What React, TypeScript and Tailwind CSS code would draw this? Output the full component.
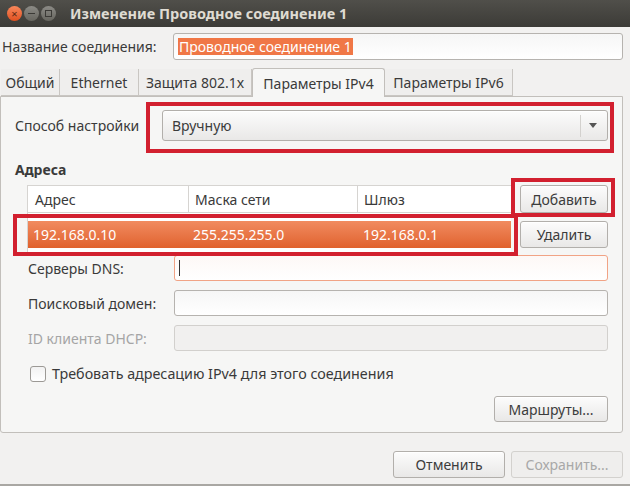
import React from "react";

const btnBase =
  "flex items-center rounded-[3px] border border-[#b2afab] bg-gradient-to-b from-[#fcfcfc] to-[#e9e8e7] text-[#3c3c3c] shadow-[inset_0_1px_0_#ffffff]";
const btn = btnBase + " justify-center";
const input = "rounded-[3px] border border-[#b6b3af] bg-gradient-to-b from-[#f6f6f6] to-white";

function RedBox({ className }: { className: string }) {
  return <div className={"pointer-events-none absolute border-[4px] border-[#d2202f] " + className} />;
}

const tabInactive =
  "flex h-[27px] items-center justify-center border-b border-r border-[#c9c6c2] bg-[#efeeed]";

export default function App() {
  return (
    <div
      className="relative flex h-[486px] w-[630px] flex-col overflow-hidden bg-[#f2f1f0] text-[14px] text-[#3a3a3a]"
      style={{ fontFamily: '"Noto Sans", "DejaVu Sans", sans-serif' }}
    >
      {/* title bar */}
      <div className="flex h-[27px] shrink-0 items-center bg-gradient-to-b from-[#504f4a] to-[#3c3b37] pl-[7px]">
        <div className="flex items-center gap-[2px]">
          <div className="flex h-[15px] w-[15px] items-center justify-center rounded-full bg-gradient-to-b from-[#f8875a] to-[#e0501e] text-[11px] leading-none text-[#5a2a14]">
            ×
          </div>
          <div className="flex h-[15px] w-[15px] items-center justify-center rounded-full bg-gradient-to-b from-[#8c8b86] to-[#67665f]">
            <div className="h-[1.5px] w-[7px] bg-[#3b3a36]" />
          </div>
          <div className="flex h-[15px] w-[15px] items-center justify-center rounded-full bg-gradient-to-b from-[#8c8b86] to-[#67665f]">
            <div className="h-[7px] w-[7px] border border-[#3b3a36]" />
          </div>
        </div>
        <div className="ml-[14px] text-[14.5px] font-bold text-[#dfdbd2]">Изменение Проводное соединение 1</div>
      </div>

      {/* name row */}
      <div className="mt-[6px] flex h-[27px] shrink-0 items-center">
        <div className="w-[173px] pl-[2px]">Название соединения:</div>
        <div className={"flex h-[27px] w-[450px] items-center pl-[4px] " + input}>
          <span className="bg-[#f07746] px-[1px] leading-[17px] text-white">Проводное соединение 1</span>
        </div>
      </div>

      {/* tabs */}
      <div className="mt-[8px] flex h-[28px] shrink-0 items-end pl-[1px]">
        <div className={tabInactive + " w-[59px]"}>Общий</div>
        <div className={tabInactive + " w-[79px]"}>Ethernet</div>
        <div className={tabInactive + " w-[113px]"}>Защита 802.1x</div>
        <div className="relative z-10 -mb-[1px] flex h-[29px] w-[133px] items-center justify-center rounded-t-[3px] border border-b-0 border-[#c2bfbb] bg-[#f6f6f5]">
          Параметры IPv4
        </div>
        <div className={tabInactive + " w-[128px]"}>Параметры IPv6</div>
      </div>

      {/* panel */}
      <div className="relative flex h-[337px] w-[623px] shrink-0 flex-col rounded-b-[3px] border border-[#c2bfbb] bg-[#f6f6f5] pr-[14px] pt-[13px]">
        <div className="flex h-[31px] items-center">
          <div className="w-[161px] pl-[14px]">Способ настройки</div>
          <div className={"h-[31px] flex-1 justify-between pl-[9px] " + btnBase}>
            <span>Вручную</span>
            <div className="flex h-[22px] items-center border-l border-[#d3d1ce] pl-[8px] pr-[10px]">
              <svg width="8" height="5" viewBox="0 0 8 5">
                <path d="M0 0 L8 0 L4 5 Z" fill="#555" />
              </svg>
            </div>
          </div>
        </div>

        <div className="mt-[20px] pl-[14px] font-bold leading-[17px]">Адреса</div>

        <div className="mt-[7px] flex gap-[9px] pl-[26px]">
          <div className="h-[68px] w-[484px] border-l border-[#d6d4d1] bg-white">
            <div className="flex h-[28px] border-b border-t border-[#d6d4d1]">
              <div className="flex w-[161px] items-center border-r border-[#d6d4d1] pl-[7px]">Адрес</div>
              <div className="flex w-[169px] items-center border-r border-[#d6d4d1] pl-[6px]">Маска сети</div>
              <div className="flex flex-1 items-center pl-[6px]">Шлюз</div>
            </div>
            <div className="mt-[8px] flex h-[27px] items-center bg-gradient-to-b from-[#f18b5f] to-[#e0612c] text-white">
              <div className="w-[160px] pl-[5px]">192.168.0.10</div>
              <div className="w-[170px] pl-[5px]">255.255.255.0</div>
              <div className="flex-1 pl-[5px]">192.168.0.1</div>
            </div>
          </div>
          <div className="flex flex-col gap-[8px]">
            <div className={"h-[28px] w-[88px] " + btn}>Добавить</div>
            <div className={"h-[27px] w-[88px] " + btn}>Удалить</div>
          </div>
        </div>

        <div className="mt-[2px] flex flex-col gap-[9px]">
          <div className="flex h-[26px] items-center">
            <div className="w-[173px] pl-[27px]">Серверы DNS:</div>
            <div className="flex h-[26px] flex-1 items-center rounded-[3px] border border-[#f1a385] bg-gradient-to-b from-[#fdf8f6] to-white pl-[4px]">
              <div className="h-[16px] w-[1px] bg-[#333]" />
            </div>
          </div>
          <div className="flex h-[26px] items-center">
            <div className="w-[173px] pl-[27px]">Поисковый домен:</div>
            <div className={"h-[26px] flex-1 " + input} />
          </div>
          <div className="flex h-[26px] items-center">
            <div className="w-[173px] pl-[27px] text-[#a5a5a5]">ID клиента DHCP:</div>
            <div className="h-[26px] flex-1 rounded-[3px] border border-[#d2d0cd] bg-[#f1f0ef]" />
          </div>
        </div>

        <div className="mt-[12px] flex items-center pl-[29px]">
          <div className="h-[16px] w-[16px] rounded-[3px] border border-[#9c9995] bg-gradient-to-b from-[#f2f2f2] to-white" />
          <div className="ml-[6px] text-[14.3px]">Требовать адресацию IPv4 для этого соединения</div>
        </div>

        <div className="mt-[12px] flex justify-end">
          <div className={"h-[26px] w-[114px] " + btn}>Маршруты...</div>
        </div>

        <RedBox className="left-[145px] top-[5px] h-[51px] w-[468px]" />
        <RedBox className="left-[12px] top-[117px] h-[42px] w-[505px]" />
        <RedBox className="left-[510px] top-[81px] h-[39px] w-[104px]" />
      </div>

      {/* bottom buttons */}
      <div className="mt-[18px] flex w-[623px] justify-end gap-[6px]">
        <div className={"h-[27px] w-[112px] " + btn}>Отменить</div>
        <div className="flex h-[27px] w-[112px] items-center justify-center rounded-[3px] border border-[#d3d1ce] bg-[#efeeed] text-[#a8a8a8]">
          Сохранить...
        </div>
      </div>
      <div className="absolute bottom-0 left-0 h-[2px] w-full bg-[#a9a7a3]" />
    </div>
  );
}
